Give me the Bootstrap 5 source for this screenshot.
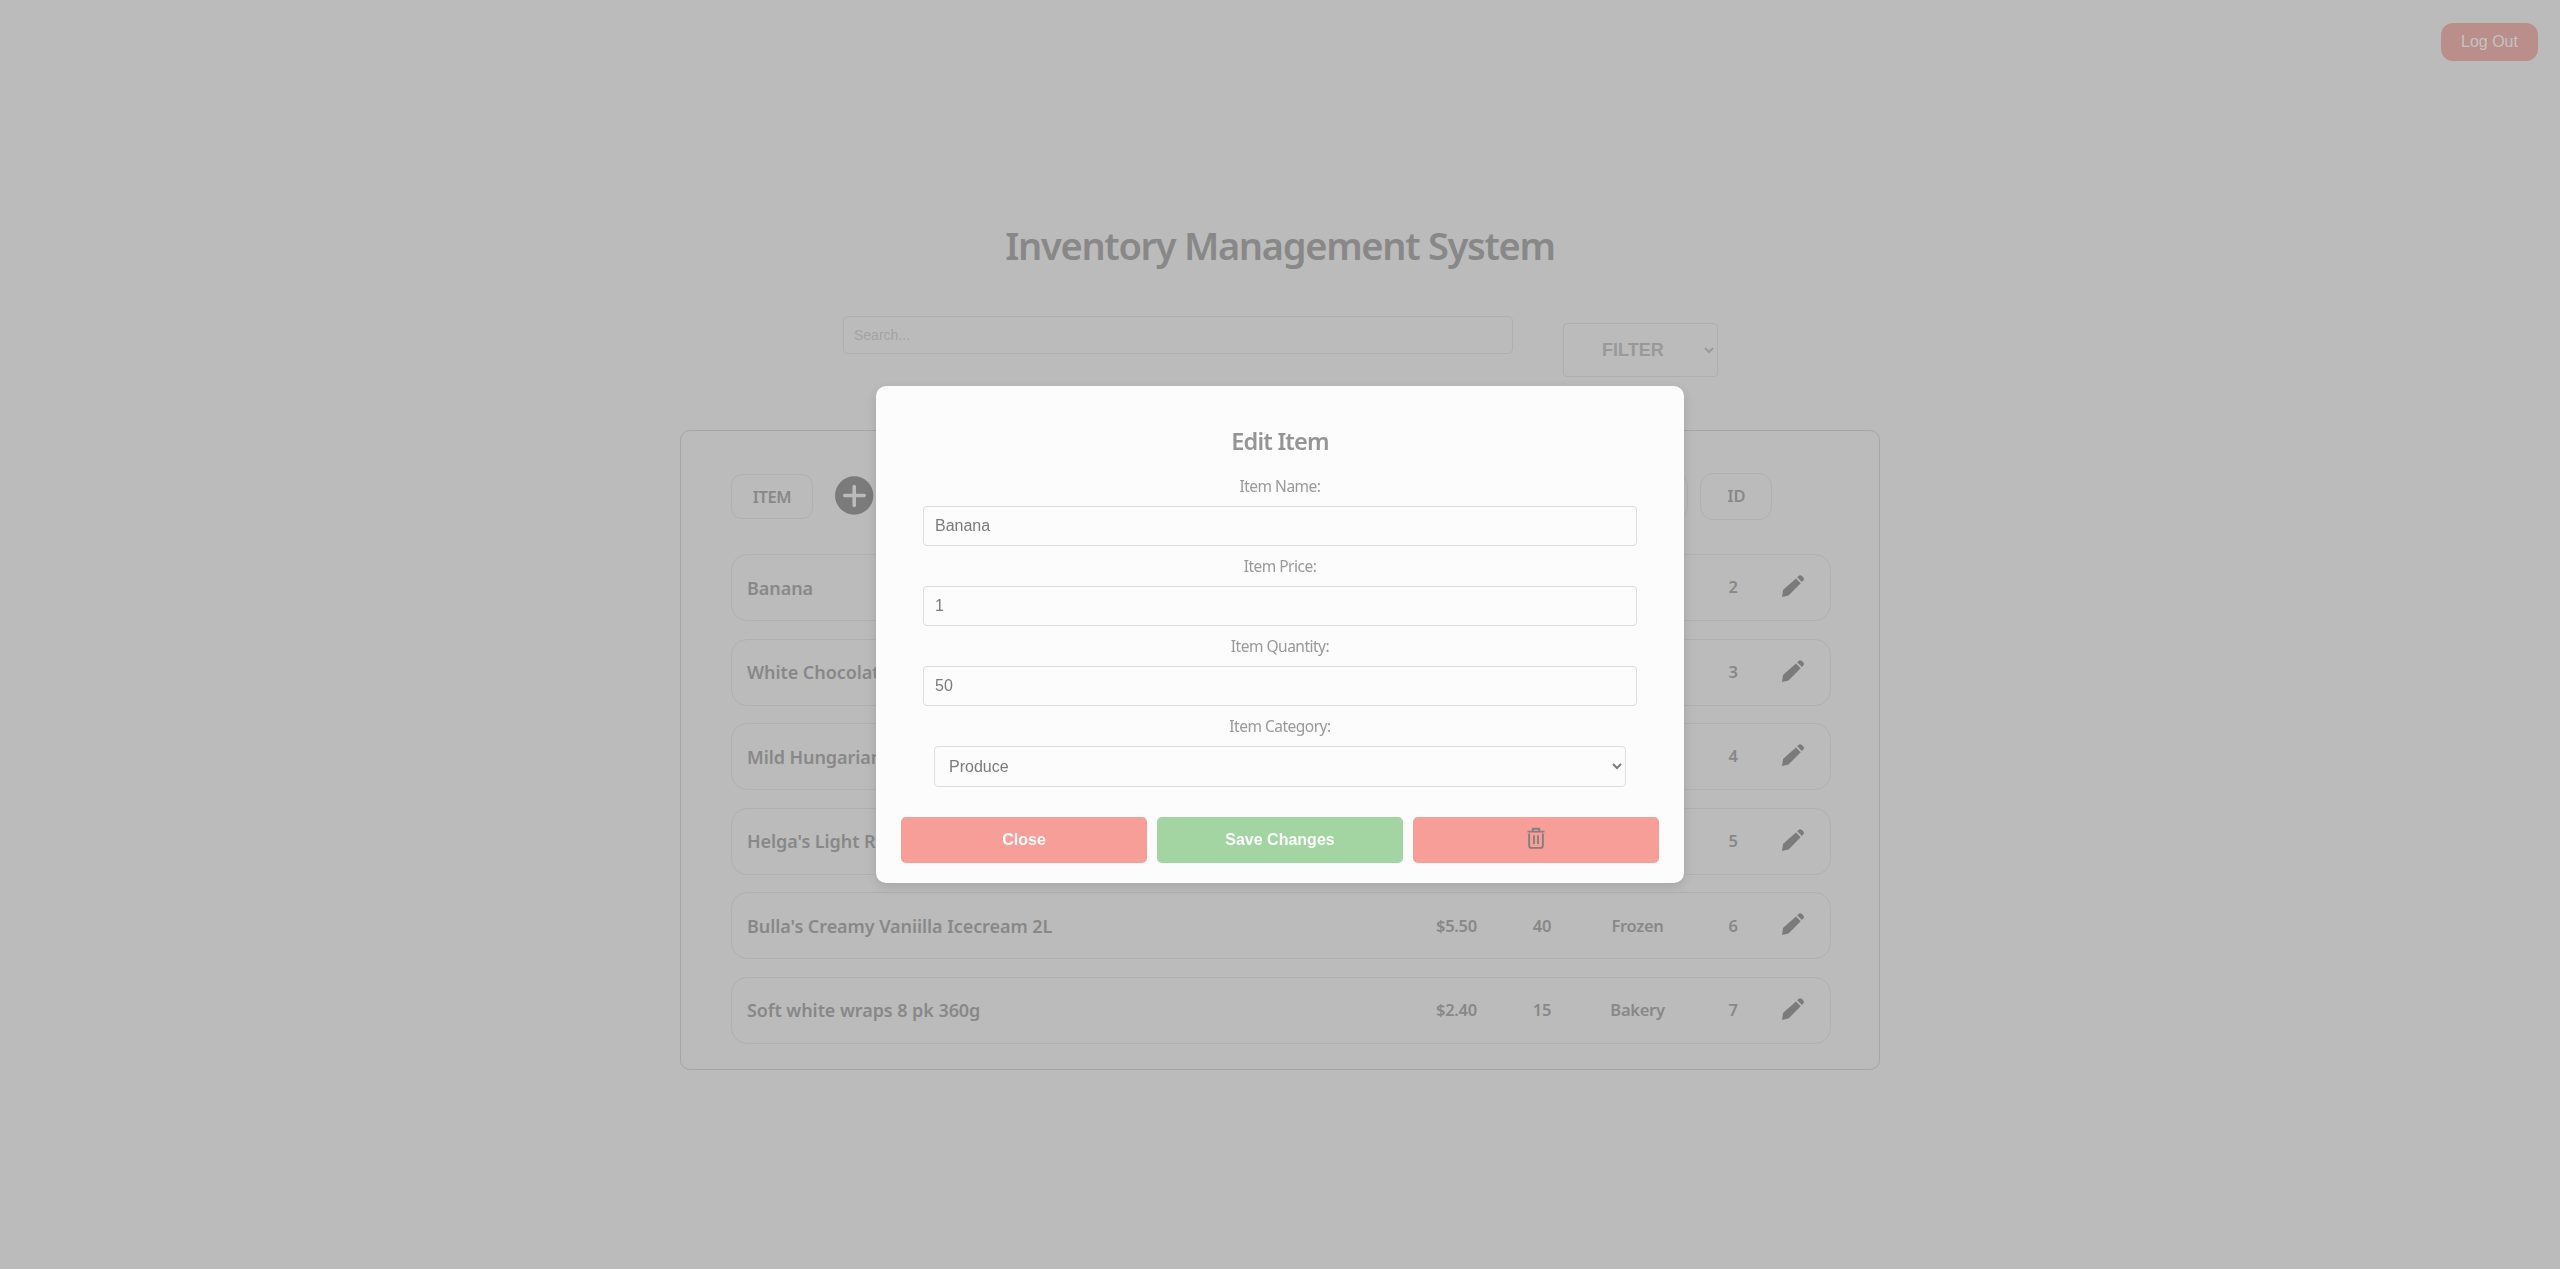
<!DOCTYPE html>
<html lang="en">
<head>
<meta charset="utf-8">
<title>Inventory Management System</title>
<link href="https://cdn.jsdelivr.net/npm/bootstrap@5.3.0/dist/css/bootstrap.min.css" rel="stylesheet">
<style>
body{background:#bbb;color:#888;font-family:"Noto Sans",sans-serif;height:1269px;overflow:hidden}
.arial{font-family:"Liberation Sans",Arial,sans-serif}
.topbar{padding:23px 22px 0 0}
.logout{width:97px;height:38px;border-radius:12px;background:#ba8f8b;color:#c3c3c3;font-size:16px;padding:0;border:0}
.page-title{font-size:38px;font-weight:600;line-height:48px;letter-spacing:-1.3px;margin:160px 0 47px}
.tools{margin-left:843px;gap:50px;height:114px}
.search-box{width:670px;height:38px;border:1px solid #afafaf;border-radius:5px;background:transparent;font-size:14px;padding:0 10px}
.search-box::placeholder{color:#a3a3a3}
.filter-box{width:155px;height:54px;margin-top:7px;border:1px solid #afafaf;border-radius:4px;background:transparent;color:#999;font-size:18px;font-weight:700;padding:0 0 0 34px}
.panel{width:1200px;height:640px;border:1px solid #a6a6a6;border-radius:10px;padding:42px 48px 0 50px}
.heads{width:1100px;height:47px;margin-bottom:34px}
.head-cell{height:47px;border:1px solid #b0b0b0;border-radius:13px;font-size:16.5px;font-weight:600}
.head-item{width:82px;height:45px;letter-spacing:-.4px;border-radius:11px;margin-right:22px;padding-top:1px}
.id-head{width:72px;margin:0 59px 0 12px;padding-left:1px}
.plus-icon{margin-bottom:3px}
.stock-row{width:1100px;height:67px;border:1px solid #b0b0b0;border-radius:16px;margin-bottom:17.6px;padding:0 7px 0 15px}
.item-name{font-size:18px;font-weight:600;letter-spacing:-.07px;padding-top:1px}
.val{font-size:16.5px;font-weight:600;letter-spacing:-.3px;text-align:center}
.w-price{width:111px}.w-qty{width:60px}.w-cat{width:131px}.w-id{width:60px}
.w-pen{width:60px;padding-bottom:3px}
.veil{z-index:10}
.dialog-box{width:808px;height:497px;border-radius:10px;background:#fcfcfc;box-shadow:0 4px 12px rgba(0,0,0,.11);padding:40px 25px 20px}
.dialog-title{font-size:23.5px;font-weight:600;line-height:30px;letter-spacing:-.8px;color:#959595;margin-bottom:20px}
.field-label{font-size:15.5px;line-height:20px;color:#999;margin-bottom:10px;letter-spacing:-.5px}
.field{width:714px;height:40px;border:1px solid #ddd;border-radius:4px;background:transparent;color:#7b7b7b;font-size:16px;padding:0 11px;margin-bottom:10px}
.pick{width:692px;height:41px;padding:0 0 0 10px;margin-bottom:30px}
.act{height:46px;border:0;border-radius:5px;font-size:16px;font-weight:700;color:#fcfcfc;background:#f89e98}
.act-save{background:#a3d5a3}
.bin-icon{margin-bottom:5px}
</style>
</head>
<body>
<header class="topbar d-flex justify-content-end"><button class="logout arial">Log Out</button></header>
<main>
  <h1 class="page-title text-center">Inventory Management System</h1>
  <div class="tools d-flex align-items-start">
    <input class="search-box arial" placeholder="Search...">
    <select class="filter-box arial"><option>FILTER</option></select>
  </div>
  <section class="panel mx-auto">
    <div class="heads d-flex align-items-center">
      <div class="head-cell head-item d-flex align-items-center justify-content-center">ITEM</div>
      <svg class="plus-icon" width="39" height="39" viewBox="0 0 39 39"><circle cx="19.2" cy="19.5" r="19.2" fill="#7b7b7b"/><path d="M19.200 10.500v19M9.700 19.500h19.500" stroke="#bbb" stroke-width="3.6" stroke-linecap="round"/></svg>
      <div class="head-cell ms-auto w-cat"></div>
      <div class="head-cell id-head d-flex align-items-center justify-content-center">ID</div>
    </div>
    <div id="stock"></div>
  </section>
</main>
<div class="veil position-fixed top-0 start-0 w-100 h-100 d-flex align-items-center justify-content-center">
  <form class="dialog-box d-flex flex-column align-items-center">
    <h2 class="dialog-title">Edit Item</h2>
    <label class="field-label">Item Name:</label>
    <input class="field arial" value="Banana">
    <label class="field-label">Item Price:</label>
    <input class="field arial" value="1">
    <label class="field-label">Item Quantity:</label>
    <input class="field arial" value="50">
    <label class="field-label">Item Category:</label>
    <select class="field pick arial"><option>Produce</option></select>
    <div class="d-flex w-100" style="gap:10px">
      <button type="button" class="act arial flex-fill w-100">Close</button>
      <button type="button" class="act act-save arial flex-fill w-100">Save Changes</button>
      <button type="button" class="act arial flex-fill w-100 d-flex align-items-center justify-content-center"><svg class="bin-icon" width="18" height="22" viewBox="0 0 18 22" fill="none" stroke="#85807f" stroke-width="1.9"><path d="M.5 4.600h17M5.800 4V1.700h6.400V4M2.100 6.500v12q0 2.400 2.400 2.400h9q2.400 0 2.400-2.400v-12M7 8.500v8.500M11 8.500v8.500"/></svg></button>
    </div>
  </form>
</div>
<script>
const items=[["Banana","$1.00",50,"Produce",2],["White Chocolate","$4.00",20,"Snacks",3],["Mild Hungarian Salami","$6.00",12,"Deli",4],["Helga's Light Rye","$4.50",18,"Bakery",5],["Bulla's Creamy Vaniilla Icecream 2L","$5.50",40,"Frozen",6],["Soft white wraps 8 pk 360g","$2.40",15,"Bakery",7]];
document.getElementById('stock').innerHTML=items.map(([n,p,q,c,i])=>`<div class="stock-row d-flex align-items-center"><div class="item-name flex-grow-1">${n}</div><div class="val w-price">${p}</div><div class="val w-qty">${q}</div><div class="val w-cat">${c}</div><div class="val w-id">${i}</div><div class="w-pen d-flex justify-content-center"><svg width="22" height="22" viewBox="0 0 22 22" fill="#7b7b7b"><path d="M0 22l1-6.400Q1.100 14.800 2 14L14 3.500l4.700 4.700L7.300 19.800Q6.500 20.600 5.500 20.800zM15.200 2.300l1-1Q17.700-.2 19.500.7q1.500.8 2.200 2.200.7 1.500-.6 2.900l-1.200 1.200z"/></svg></div></div>`).join('');
</script>
<script src="https://cdn.jsdelivr.net/npm/bootstrap@5.3.0/dist/js/bootstrap.bundle.min.js"></script>
</body>
</html>
